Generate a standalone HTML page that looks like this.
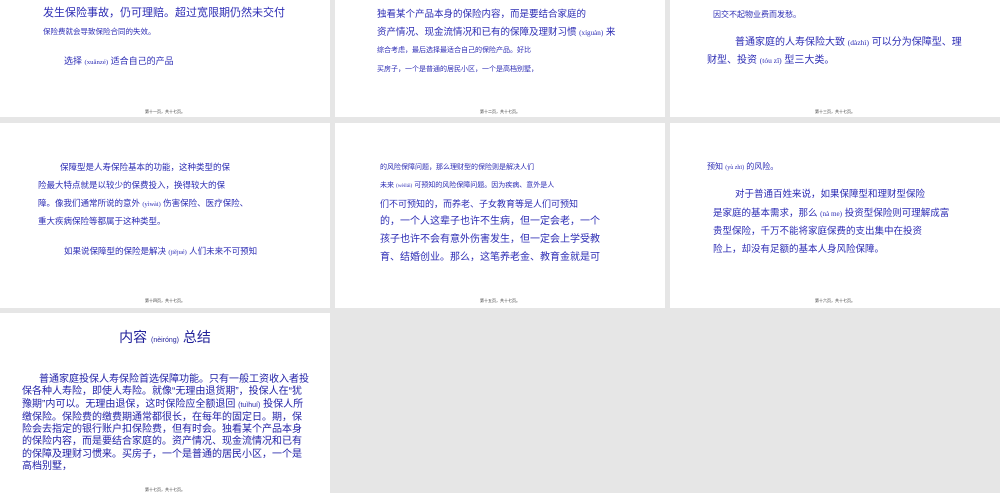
<!DOCTYPE html>
<html><head><meta charset="utf-8"><style>
body{margin:0;width:1000px;height:493px;background:#e6e6e6;overflow:hidden;position:relative;font-family:"Liberation Sans","Noto Sans CJK SC",sans-serif;color:#2c2cb4}
.s{position:absolute;background:#fff;overflow:hidden}
.t{position:absolute;white-space:nowrap;line-height:1}
.p{font-family:"Liberation Serif",serif;font-size:0.75em}
.f{position:absolute;font-size:4px;color:#333;width:100%;text-align:center;line-height:1}
</style></head><body>
<div class="s" style="left:0;top:0;width:330px;height:117px">
<div class="t" style="left:43px;top:8px;font-size:11px">发生保险事故，仍可理赔。超过宽限期仍然未交付</div>
<div class="t" style="left:43px;top:28px;font-size:7.5px">保险费就会导致保险合同的失效。</div>
<div class="t" style="left:64px;top:57px;font-size:9px">选择 <span class="p">(xuǎnzé)</span> 适合自己的产品</div>
<div class="f" style="top:110px">第十一页，共十七页。</div></div>
<div class="s" style="left:335px;top:0;width:330px;height:117px">
<div class="t" style="left:42px;top:10px;font-size:9.5px">独看某个产品本身的保险内容，而是要结合家庭的</div>
<div class="t" style="left:42px;top:28px;font-size:9.5px">资产情况、现金流情况和已有的保障及理财习惯 <span class="p">(xíguàn)</span> 来</div>
<div class="t" style="left:42px;top:47px;font-size:7px">综合考虑，最后选择最适合自己的保险产品。好比</div>
<div class="t" style="left:42px;top:66px;font-size:7px">买房子，一个是普通的居民小区，一个是高档别墅，</div>
<div class="f" style="top:110px">第十二页，共十七页。</div></div>
<div class="s" style="left:670px;top:0;width:330px;height:117px">
<div class="t" style="left:43px;top:11px;font-size:8px">因交不起物业费而发愁。</div>
<div class="t" style="left:65px;top:38px;font-size:10px">普通家庭的人寿保险大致 <span class="p">(dàzhì)</span> 可以分为保障型、理</div>
<div class="t" style="left:37px;top:56px;font-size:10px">财型、投资 <span class="p">(tóu zī)</span> 型三大类。</div>
<div class="f" style="top:110px">第十三页，共十七页。</div></div>
<div class="s" style="left:0;top:123px;width:330px;height:185px">
<div class="t" style="left:60px;top:40px;font-size:8.5px">保障型是人寿保险基本的功能，这种类型的保</div>
<div class="t" style="left:38px;top:58px;font-size:8.5px">险最大特点就是以较少的保费投入，换得较大的保</div>
<div class="t" style="left:38px;top:76px;font-size:8.5px">障。像我们通常所说的意外 <span class="p">(yìwài)</span> 伤害保险、医疗保险、</div>
<div class="t" style="left:38px;top:94px;font-size:8.5px">重大疾病保险等都属于这种类型。</div>
<div class="t" style="left:64px;top:124px;font-size:8.5px">如果说保障型的保险是解决 <span class="p">(jiějué)</span> 人们未来不可预知</div>
<div class="f" style="top:176px">第十四页，共十七页。</div></div>
<div class="s" style="left:335px;top:123px;width:330px;height:185px">
<div class="t" style="left:45px;top:41px;font-size:7px">的风险保障问题，那么理财型的保险则是解决人们</div>
<div class="t" style="left:45px;top:59px;font-size:7px">未来 <span class="p">(wèilái)</span> 可预知的风险保障问题。因为疾病、意外是人</div>
<div class="t" style="left:45px;top:77px;font-size:9px">们不可预知的，而养老、子女教育等是人们可预知</div>
<div class="t" style="left:45px;top:94px;font-size:10px">的，一个人这辈子也许不生病，但一定会老，一个</div>
<div class="t" style="left:45px;top:112px;font-size:10px">孩子也许不会有意外伤害发生，但一定会上学受教</div>
<div class="t" style="left:45px;top:130px;font-size:10px">育、结婚创业。那么，这笔养老金、教育金就是可</div>
<div class="f" style="top:176px">第十五页，共十七页。</div></div>
<div class="s" style="left:670px;top:123px;width:330px;height:185px">
<div class="t" style="left:37px;top:40px;font-size:8px">预知 <span class="p">(yù zhī)</span> 的风险。</div>
<div class="t" style="left:65px;top:67px;font-size:9.5px">对于普通百姓来说，如果保障型和理财型保险</div>
<div class="t" style="left:43px;top:86px;font-size:9.5px">是家庭的基本需求，那么 <span class="p">(nà me)</span> 投资型保险则可理解成富</div>
<div class="t" style="left:43px;top:104px;font-size:9.5px">贵型保险，千万不能将家庭保费的支出集中在投资</div>
<div class="t" style="left:43px;top:122px;font-size:9.5px">险上，却没有足额的基本人身风险保障。</div>
<div class="f" style="top:176px">第十六页，共十七页。</div></div>
<div class="s" style="left:0;top:313px;width:330px;height:180px">
<div class="t" style="left:0;width:330px;text-align:center;top:17px;font-size:14px;color:#22229a">内容 <span style="font-size:7px">(nèiróng)</span> 总结</div>
<div style="position:absolute;left:22px;top:61px;font-size:10px;line-height:12.3px;white-space:nowrap;color:#2222a8">
<div style="padding-left:17px">普通家庭投保人寿保险首选保障功能。只有一般工资收入者投</div>
<div>保各种人寿险，即使人寿险。就像“无理由退货期”，投保人在“犹</div>
<div>豫期”内可以。无理由退保，这时保险应全额退回 <span style="font-size:7px">(tuìhuí)</span> 投保人所</div>
<div>缴保险。保险费的缴费期通常都很长，在每年的固定日。期，保</div>
<div>险会去指定的银行账户扣保险费，但有时会。独看某个产品本身</div>
<div>的保险内容，而是要结合家庭的。资产情况、现金流情况和已有</div>
<div>的保障及理财习惯来。买房子，一个是普通的居民小区，一个是</div>
<div>高档别墅，</div></div>
<div class="f" style="top:175px">第十七页，共十七页。</div></div>
</body></html>
